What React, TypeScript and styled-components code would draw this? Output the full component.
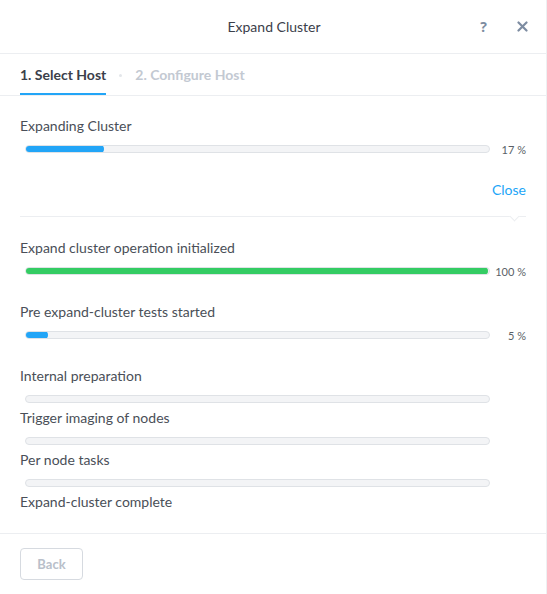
import React from "react";
import styled, { createGlobalStyle } from "styled-components";

const Global = createGlobalStyle`
  html, body { margin: 0; padding: 0; background: #ffffff; }
  body { font-family: Lato, "Open Sans", sans-serif; -webkit-font-smoothing: antialiased; }
  * { box-sizing: border-box; }
`;

const Modal = styled.div`
  width: 547px;
  height: 594px;
  display: flex;
  flex-direction: column;
  background: #fff;
  border-right: 1px solid #eef0f2;
`;

const Header = styled.div`
  height: 54px;
  display: grid;
  grid-template-columns: 1fr auto 1fr;
  align-items: center;
  border-bottom: 1px solid #eceef1;
  padding: 0 18px 0 20px;
`;

const Title = styled.div`
  grid-column: 2;
  font-size: 14px;
  color: #3b404a;
`;

const HeaderActions = styled.div`
  grid-column: 3;
  justify-self: end;
  display: flex;
  align-items: center;
  gap: 30px;
`;

const IconButton = styled.span`
  color: #7d8ca1;
  font-family: "Open Sans", sans-serif;
  font-size: 14px;
  font-weight: 700;
  line-height: 1;
  display: flex;
  align-items: center;
`;

const Tabs = styled.div`
  height: 42px;
  display: flex;
  align-items: stretch;
  padding: 0 20px;
  border-bottom: 1px solid #eceef1;
  gap: 13px;
`;

const Tab = styled.div<{ $active?: boolean }>`
  display: flex;
  align-items: center;
  font-size: 14px;
  font-weight: 700;
  color: ${(p) => (p.$active ? "#3b404a" : "#c3c9d2")};
  border-bottom: 2px solid ${(p) => (p.$active ? "#22a5f7" : "transparent")};
  padding-top: 2px;
`;

const TabDot = styled.span`
  align-self: center;
  width: 3px;
  height: 3px;
  border-radius: 50%;
  background: #e3e6ea;
  margin-top: 2px;
`;

const Body = styled.div`
  flex: 1;
  padding: 21px 20px 0 20px;
  display: flex;
  flex-direction: column;
`;

const Item = styled.div<{ $gap: number }>`
  display: flex;
  flex-direction: column;
  margin-bottom: ${(p) => p.$gap}px;
`;

const Label = styled.div`
  font-size: 14px;
  line-height: 18px;
  color: #4a4f58;
  margin-bottom: 10px;
`;

const BarRow = styled.div`
  display: flex;
  align-items: center;
  height: 8px;
  padding-left: 5px;
`;

const Track = styled.div`
  width: 465px;
  height: 8px;
  border: 1px solid #dfe2e6;
  border-radius: 4px;
  background: #f3f4f6;
  overflow: hidden;
`;

const Fill = styled.div<{ $color: string }>`
  height: 8px;
  margin: -1px;
  border-radius: 4px;
  background: ${(p) => p.$color};
`;

const Percent = styled.div`
  flex: 1;
  text-align: right;
  font-size: 11px;
  color: #5a5f67;
`;

const CloseRow = styled.div`
  display: flex;
  justify-content: flex-end;
  margin-top: 28px;
`;

const CloseLink = styled.a`
  font-size: 14px;
  line-height: 18px;
  color: #22a5f7;
  text-decoration: none;
  cursor: pointer;
`;

const Divider = styled.div`
  position: relative;
  height: 1px;
  background: #eceef1;
  margin: 17px 0 22px 0;
`;

const Notch = styled.span`
  position: absolute;
  right: 8px;
  top: 0;
  width: 7px;
  height: 7px;
  background: #fff;
  border-right: 1px solid #eceef1;
  border-bottom: 1px solid #eceef1;
  transform: translateY(-3px) rotate(45deg);
`;

const Footer = styled.div`
  height: 61px;
  border-top: 1px solid #eceef1;
  padding: 14px 20px;
  display: flex;
  align-items: flex-start;
`;

const BackButton = styled.button`
  width: 63px;
  height: 32px;
  border: 1px solid #d6dae0;
  border-radius: 4px;
  background: #fff;
  color: #b9c0ca;
  font-family: inherit;
  font-size: 13px;
  font-weight: 700;
`;

type Step = { label: string; pct?: number; color?: string; bar?: boolean };

const steps: Step[] = [
  { label: "Expand cluster operation initialized", pct: 100, color: "#34cc63" },
  { label: "Pre expand-cluster tests started", pct: 5, color: "#22a5f7" },
  { label: "Internal preparation" },
  { label: "Trigger imaging of nodes" },
  { label: "Per node tasks" },
  { label: "Expand-cluster complete", bar: false },
];

function ProgressBar({ pct, color }: { pct?: number; color?: string }) {
  return (
    <BarRow>
      <Track>
        {pct !== undefined && <Fill $color={color || "#22a5f7"} style={{ width: `${pct}%` }} />}
      </Track>
      {pct !== undefined && <Percent>{pct} %</Percent>}
    </BarRow>
  );
}

export default function App() {
  return (
    <>
      <Global />
      <Modal>
        <Header>
          <Title>Expand Cluster</Title>
          <HeaderActions>
            <IconButton>?</IconButton>
            <IconButton>
              <svg width="11" height="11" viewBox="0 0 11 11">
                <path d="M1.5 1.5 L9.5 9.5 M9.5 1.5 L1.5 9.5" stroke="#7d8ca1" strokeWidth="2.2" strokeLinecap="round" />
              </svg>
            </IconButton>
          </HeaderActions>
        </Header>
        <Tabs>
          <Tab $active>1. Select Host</Tab>
          <TabDot />
          <Tab>2. Configure Host</Tab>
        </Tabs>
        <Body>
          <Item $gap={0}>
            <Label>Expanding Cluster</Label>
            <ProgressBar pct={17} color="#22a5f7" />
          </Item>
          <CloseRow>
            <CloseLink>Close</CloseLink>
          </CloseRow>
          <Divider>
            <Notch />
          </Divider>
          {steps.map((s) => (
            <Item key={s.label} $gap={s.pct !== undefined ? 28 : 6}>
              <Label>{s.label}</Label>
              {s.bar !== false && <ProgressBar pct={s.pct} color={s.color} />}
            </Item>
          ))}
        </Body>
        <Footer>
          <BackButton>Back</BackButton>
        </Footer>
      </Modal>
    </>
  );
}
